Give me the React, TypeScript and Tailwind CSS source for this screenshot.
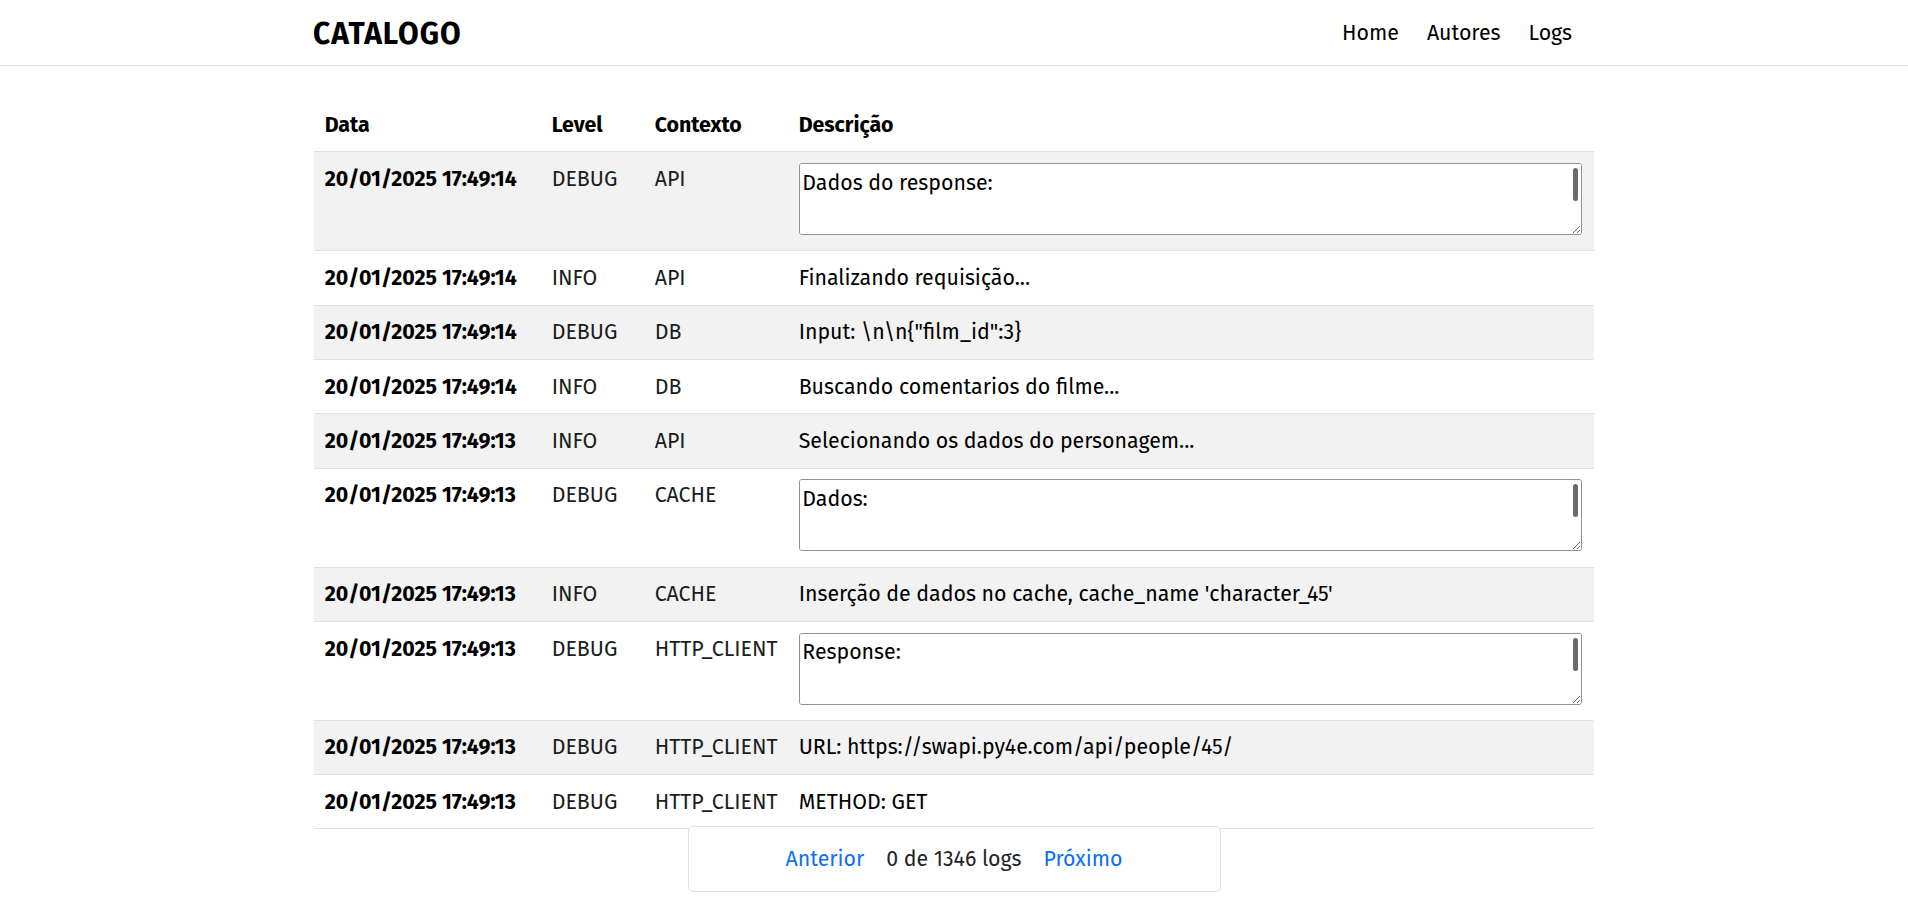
import React from "react";

type Row = { date: string; level: string; ctx: string; desc: string; area?: boolean };

const rows: Row[] = [
  { date: "20/01/2025 17:49:14", level: "DEBUG", ctx: "API", desc: "Dados do response:\n\n\n{\"id\": 3, \"comments\": []}", area: true },
  { date: "20/01/2025 17:49:14", level: "INFO", ctx: "API", desc: "Finalizando requisição..." },
  { date: "20/01/2025 17:49:14", level: "DEBUG", ctx: "DB", desc: "Input: \\n\\n{\"film_id\":3}" },
  { date: "20/01/2025 17:49:14", level: "INFO", ctx: "DB", desc: "Buscando comentarios do filme..." },
  { date: "20/01/2025 17:49:13", level: "INFO", ctx: "API", desc: "Selecionando os dados do personagem..." },
  { date: "20/01/2025 17:49:13", level: "DEBUG", ctx: "CACHE", desc: "Dados:\n\n\n{\"name\": \"character_45\"}", area: true },
  { date: "20/01/2025 17:49:13", level: "INFO", ctx: "CACHE", desc: "Inserção de dados no cache, cache_name 'character_45'" },
  { date: "20/01/2025 17:49:13", level: "DEBUG", ctx: "HTTP_CLIENT", desc: "Response:\n\n\n{\"status\": 200}", area: true },
  { date: "20/01/2025 17:49:13", level: "DEBUG", ctx: "HTTP_CLIENT", desc: "URL: https://swapi.py4e.com/api/people/45/" },
  { date: "20/01/2025 17:49:13", level: "DEBUG", ctx: "HTTP_CLIENT", desc: "METHOD: GET" },
];

const cell = "px-[10.67px] pt-[10.67px] pb-[10.67px] align-top border-b border-[#dee2e6] leading-[32px]";

export default function App() {
  return (
    <div
      className="min-h-[922px] bg-white text-[#1a1d20] text-[21.33px]"
      style={{ fontFamily: '"Fira Sans", "Open Sans", "Noto Sans", sans-serif' }}
    >
      <nav className="h-[66px] border-b border-[#dee2e6]">
        <div className="mx-auto w-[1280px] h-full flex items-center justify-between pt-[2px]">
          <span className="text-[30px] font-bold tracking-[1px] text-black leading-none -ml-px">CATALOGO</span>
          <div className="flex items-center gap-[28px] pr-[22px] text-black">
            <a className="leading-none">Home</a>
            <a className="leading-none">Autores</a>
            <a className="leading-none">Logs</a>
          </div>
        </div>
      </nav>

      <main className="mx-auto w-[1280px] mt-8">
        <table className="w-[1280px] table-fixed">
          <colgroup>
            <col className="w-[227px]" />
            <col className="w-[103px]" />
            <col className="w-[144px]" />
            <col className="w-[806px]" />
          </colgroup>
          <thead>
            <tr>
              <th className={cell + " text-left font-bold text-black"}>Data</th>
              <th className={cell + " text-left font-bold text-black"}>Level</th>
              <th className={cell + " text-left font-bold text-black"}>Contexto</th>
              <th className={cell + " text-left font-bold text-black"}>Descrição</th>
            </tr>
          </thead>
          <tbody>
            {rows.map((r, i) => (
              <tr key={i} className={i % 2 === 0 ? "bg-[#f2f2f2]" : "bg-white"}>
                <td className={cell + " font-bold whitespace-nowrap text-black"}>{r.date}</td>
                <td className={cell}>{r.level}</td>
                <td className={cell + " whitespace-nowrap"}>{r.ctx}</td>
                {r.area ? (
                  <td className="px-[10.67px] pt-[10.67px] pb-[15.33px] align-top border-b border-[#dee2e6]">
                    <div className="relative w-[783px] h-[72px]">
                      <textarea
                        readOnly
                        defaultValue={r.desc}
                        className="block w-[783px] h-[72px] bg-white border border-[#8f8f9d] rounded-[3px] px-[2.67px] py-[2.67px] text-[21.33px] leading-[32px] text-black overflow-y-scroll [scrollbar-width:none] outline-none"
                      />
                      <div className="absolute right-[4px] top-[5px] w-[5px] h-[33px] rounded-full bg-[#6b6b6b]" />
                    </div>
                  </td>
                ) : (
                  <td className={cell + " text-black"}>{r.desc}</td>
                )}
              </tr>
            ))}
          </tbody>
        </table>

        <div className="relative mx-auto -mt-[3px] w-[533px] h-[66px] bg-white border border-[#dee2e6] rounded-[5px] flex items-center justify-center gap-[22px] leading-[32px]">
          <a className="text-[#0d6efd]">Anterior</a>
          <span className="text-[#212529]">0 de 1346 logs</span>
          <a className="text-[#0d6efd]">Próximo</a>
        </div>
      </main>
    </div>
  );
}
